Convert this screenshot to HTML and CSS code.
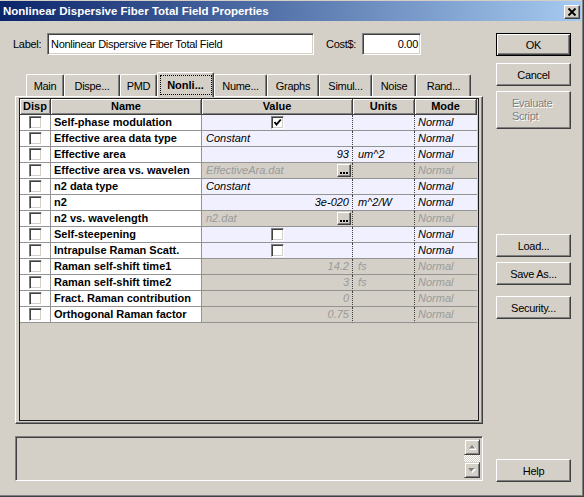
FILE: index.html
```html
<!DOCTYPE html>
<html>
<head>
	<meta charset="utf-8">
	<title>Nonlinear Dispersive Fiber Total Field Properties</title>
	<link rel="stylesheet" href="styles.css">
</head>
<body>
<div class="window">
	<div class="titlebar">
		<span class="title">Nonlinear Dispersive Fiber Total Field Properties</span>
		<span class="close"><svg width="12" height="10" viewBox="0 0 12 10"><path d="M2.5 1.5 L9.5 8.5 M9.5 1.5 L2.5 8.5" stroke="#000" stroke-width="1.8" fill="none"/></svg></span>
	</div>

	<div class="client">
		<div class="main">
			<div class="label-row">
				<span class="field-label">Label:</span>
				<div class="text-input name-input">Nonlinear Dispersive Fiber Total Field</div>
				<span class="field-label cost-label">Cost$:</span>
				<div class="text-input cost-input">0.00</div>
			</div>

			<div class="tabs">
				<div class="tab" style="width:38px">Main</div>
				<div class="tab" style="width:56px">Dispe...</div>
				<div class="tab" style="width:37px">PMD</div>
				<div class="tab active" style="width:57px"><span class="focus">Nonli...</span></div>
				<div class="tab" style="width:53px">Nume...</div>
				<div class="tab" style="width:52px">Graphs</div>
				<div class="tab" style="width:53px">Simul...</div>
				<div class="tab" style="width:44px">Noise</div>
				<div class="tab" style="width:55px">Rand...</div>
			</div>

			<div class="panel">
				<div class="grid">
					<table>
						<colgroup>
							<col style="width:31px">
							<col style="width:151px">
							<col style="width:151px">
							<col style="width:62px">
							<col style="width:62px">
						</colgroup>
						<tr>
							<th>Disp</th><th>Name</th><th>Value</th><th>Units</th><th>Mode</th>
						</tr>
						<tr>
							<td class="disp"><div class="center"><span class="check"></span></div></td>
							<td class="name">Self-phase modulation</td>
							<td class="val"><div class="center"><span class="check checked"><svg width="9" height="9" viewBox="0 0 9 9"><path d="M1.5 4 L3.5 6.5 L7.8 1.5" stroke="#000" stroke-width="1.9" fill="none"/></svg></span></div></td>
							<td class="unit"></td>
							<td class="mode">Normal</td>
						</tr>
						<tr>
							<td class="disp"><div class="center"><span class="check"></span></div></td>
							<td class="name">Effective area data type</td>
							<td class="val">Constant</td>
							<td class="unit"></td>
							<td class="mode">Normal</td>
						</tr>
						<tr>
							<td class="disp"><div class="center"><span class="check"></span></div></td>
							<td class="name">Effective area</td>
							<td class="val num">93</td>
							<td class="unit">um^2</td>
							<td class="mode">Normal</td>
						</tr>
						<tr class="off">
							<td class="disp"><div class="center"><span class="check"></span></div></td>
							<td class="name">Effective area vs. wavelen</td>
							<td class="val file"><div class="file-row"><span>EffectiveAra.dat</span><span class="browse"><svg width="10" height="9" viewBox="0 0 10 9"><rect x="1" y="6" width="2" height="2"/><rect x="4" y="6" width="2" height="2"/><rect x="7" y="6" width="2" height="2"/></svg></span></div></td>
							<td class="unit"></td>
							<td class="mode">Normal</td>
						</tr>
						<tr>
							<td class="disp"><div class="center"><span class="check"></span></div></td>
							<td class="name">n2 data type</td>
							<td class="val">Constant</td>
							<td class="unit"></td>
							<td class="mode">Normal</td>
						</tr>
						<tr>
							<td class="disp"><div class="center"><span class="check"></span></div></td>
							<td class="name">n2</td>
							<td class="val num">3e-020</td>
							<td class="unit">m^2/W</td>
							<td class="mode">Normal</td>
						</tr>
						<tr class="off">
							<td class="disp"><div class="center"><span class="check"></span></div></td>
							<td class="name">n2 vs. wavelength</td>
							<td class="val file"><div class="file-row"><span>n2.dat</span><span class="browse"><svg width="10" height="9" viewBox="0 0 10 9"><rect x="1" y="6" width="2" height="2"/><rect x="4" y="6" width="2" height="2"/><rect x="7" y="6" width="2" height="2"/></svg></span></div></td>
							<td class="unit"></td>
							<td class="mode">Normal</td>
						</tr>
						<tr>
							<td class="disp"><div class="center"><span class="check"></span></div></td>
							<td class="name">Self-steepening</td>
							<td class="val"><div class="center"><span class="check"></span></div></td>
							<td class="unit"></td>
							<td class="mode">Normal</td>
						</tr>
						<tr>
							<td class="disp"><div class="center"><span class="check"></span></div></td>
							<td class="name">Intrapulse Raman Scatt.</td>
							<td class="val"><div class="center"><span class="check"></span></div></td>
							<td class="unit"></td>
							<td class="mode">Normal</td>
						</tr>
						<tr class="off">
							<td class="disp"><div class="center"><span class="check"></span></div></td>
							<td class="name">Raman self-shift time1</td>
							<td class="val num">14.2</td>
							<td class="unit">fs</td>
							<td class="mode">Normal</td>
						</tr>
						<tr class="off">
							<td class="disp"><div class="center"><span class="check"></span></div></td>
							<td class="name">Raman self-shift time2</td>
							<td class="val num">3</td>
							<td class="unit">fs</td>
							<td class="mode">Normal</td>
						</tr>
						<tr class="off">
							<td class="disp"><div class="center"><span class="check"></span></div></td>
							<td class="name">Fract. Raman contribution</td>
							<td class="val num">0</td>
							<td class="unit"></td>
							<td class="mode">Normal</td>
						</tr>
						<tr class="off">
							<td class="disp"><div class="center"><span class="check"></span></div></td>
							<td class="name">Orthogonal Raman factor</td>
							<td class="val num">0.75</td>
							<td class="unit"></td>
							<td class="mode">Normal</td>
						</tr>
					</table>
				</div>
			</div>

			<div class="console">
				<div class="scrollbar">
					<div class="arrow"><svg width="7" height="5" viewBox="0 0 7 5"><path d="M4 1 L8 5 L0 5 Z" fill="#fff"/><path d="M3 0 L6 3.5 L0 3.5 Z" fill="#808080"/></svg></div>
					<div class="track"></div>
					<div class="arrow"><svg width="8" height="5" viewBox="0 0 8 5"><path d="M1 1 L8 1 L4.5 5 Z" fill="#fff"/><path d="M0 0 L6.5 0 L3.2 3.8 Z" fill="#808080"/></svg></div>
				</div>
			</div>
		</div>

		<div class="side">
			<div class="btn default ok">OK</div>
			<div class="btn cancel">Cancel</div>
			<div class="btn disabled evaluate">Evaluate<br>Script</div>
			<div class="btn load">Load...</div>
			<div class="btn save">Save As...</div>
			<div class="btn security">Security...</div>
			<div class="btn help">Help</div>
		</div>
	</div>
</div>
</body>
</html>
```

FILE: styles.css
```css
body {
	margin: 0;
	background: #d4d0c8;
	font-family: "Liberation Sans", Arial, sans-serif;
	font-size: 11px;
	letter-spacing: -0.3px;
	color: #000;
}

.window {
	width: 584px;
	height: 497px;
	box-sizing: border-box;
	padding-top: 1px;
	border-right: 1px solid #404040;
	border-bottom: 1px solid #404040;
	box-shadow: inset -1px -1px #808080;
	overflow: hidden;
}

/* title bar */
.titlebar {
	height: 20px;
	margin-right: 2px;
	padding-left: 3px;
	background: linear-gradient(to right, #0a246a, #a6caf0);
	display: flex;
	justify-content: space-between;
	align-items: flex-start;
}
.title {
	color: #fff;
	font-weight: bold;
	font-size: 11.5px;
	letter-spacing: 0;
	line-height: 20px;
}
.close {
	width: 16px;
	height: 14px;
	box-sizing: border-box;
	margin: 4px 1px 0 0;
	background: #d4d0c8;
	border: 1px solid;
	border-color: #fff #404040 #404040 #fff;
	box-shadow: inset -1px -1px #808080;
	display: flex;
	align-items: center;
	justify-content: center;
}

.client {
	display: flex;
}
.main {
	width: 496px;
}
.side {
	width: 75px;
	display: flex;
	flex-direction: column;
}

/* label + cost */
.label-row {
	display: flex;
	align-items: center;
	height: 22px;
	margin-top: 12px;
	padding-left: 13px;
}
.field-label {
	width: 34px;
}
.cost-label {
	width: 36px;
	margin-left: 12px;
}
.text-input {
	height: 22px;
	box-sizing: border-box;
	background: #fff;
	border: 1px solid;
	border-color: #808080 #fff #fff #808080;
	box-shadow: inset 1px 1px #404040, inset -1px -1px #d4d0c8;
	display: flex;
	align-items: center;
	padding: 0 3px;
}
.name-input {
	width: 267px;
}
.cost-input {
	width: 59px;
	justify-content: flex-end;
	padding-right: 2px;
}

/* tabs */
.tabs {
	display: flex;
	align-items: flex-end;
	height: 24px;
	margin-top: 17px;
	padding-left: 26px;
	position: relative;
	z-index: 1;
}
.tab {
	height: 22px;
	box-sizing: border-box;
	background: #d4d0c8;
	border-top: 1px solid #fff;
	border-left: 1px solid #fff;
	border-right: 1px solid #404040;
	box-shadow: inset -1px 0 #808080;
	border-radius: 2px 2px 0 0;
	display: flex;
	align-items: center;
	justify-content: center;
}
.tab.active {
	height: 25px;
	margin-bottom: -1px;
	font-weight: bold;
	letter-spacing: 0;
}
.focus {
	width: 52px;
	height: 20px;
	box-sizing: border-box;
	border: 1px dotted #000;
	display: flex;
	align-items: center;
	justify-content: center;
}

/* tab page */
.panel {
	width: 468px;
	height: 328px;
	box-sizing: border-box;
	margin-left: 15px;
	border: 1px solid;
	border-color: #fff #404040 #404040 #fff;
	box-shadow: inset -1px -1px #808080;
	padding: 1px 3px 2px 3px;
}
.grid {
	height: 100%;
	box-sizing: border-box;
	border: 1px solid #1c1c1c;
	background: #d4d0c8;
}
table {
	width: 457px;
	table-layout: fixed;
	border-collapse: separate;
	border-spacing: 0;
}
th {
	padding: 0;
	line-height: 15px;
	background: #d4d0c8;
	border-right: 1px solid #404040;
	border-bottom: 1px solid #404040;
	box-shadow: inset 1px 1px #fff, inset -1px -1px #808080;
	font-weight: bold;
	letter-spacing: 0;
}
td {
	padding: 0 4px;
	line-height: 15px;
	border-bottom: 1px solid #939393;
	white-space: nowrap;
	overflow: hidden;
}
.disp {
	padding: 0;
	background: #fff;
	border-right: 1px solid #939393;
}
.name {
	padding-left: 3px;
	background: #fff;
	font-weight: bold;
	letter-spacing: 0;
	border-right: 1px solid #939393;
}
.val, .unit, .mode {
	background: #f0f0ff;
	font-style: italic;
	letter-spacing: 0;
}
.val, .unit {
	border-right: 1px dotted #404040;
}
.unit {
	padding-left: 5px;
}
.mode {
	padding-left: 3px;
}
.num {
	text-align: right;
	padding-right: 3px;
}
.off .val, .off .unit, .off .mode {
	background: #d4d0c8;
	color: #9a9a9a;
}
.val.file {
	padding-right: 1px;
}
.file-row {
	display: flex;
	justify-content: space-between;
	align-items: center;
	height: 15px;
}
.browse {
	width: 14px;
	height: 13px;
	box-sizing: border-box;
	background: #d4d0c8;
	border: 1px solid;
	border-color: #fff #404040 #404040 #fff;
	box-shadow: inset -1px -1px #808080;
	display: flex;
	align-items: center;
	justify-content: center;
}
.center {
	height: 15px;
	display: flex;
	align-items: center;
	justify-content: center;
}
.val .center {
	margin-right: -1px;
}
.check {
	width: 13px;
	height: 13px;
	box-sizing: border-box;
	background: #fff;
	border: 1px solid;
	border-color: #808080 #fff #fff #808080;
	box-shadow: inset 1px 1px #404040, inset -1px -1px #d4d0c8;
	display: flex;
	align-items: center;
	justify-content: center;
}

/* message box */
.console {
	width: 468px;
	height: 45px;
	box-sizing: border-box;
	margin: 12px 0 0 15px;
	padding: 2px;
	border: 1px solid;
	border-color: #808080 #fff #fff #808080;
	box-shadow: inset 1px 1px #404040, inset -1px -1px #d4d0c8;
	display: flex;
	justify-content: flex-end;
}
.scrollbar {
	width: 16px;
	display: flex;
	flex-direction: column;
}
.arrow {
	height: 16px;
	box-sizing: border-box;
	border: 1px solid;
	border-color: #d4d0c8 #404040 #404040 #d4d0c8;
	box-shadow: inset 1px 1px #fff, inset -1px -1px #808080;
	display: flex;
	align-items: center;
	justify-content: center;
}
.track {
	flex: 1;
	background: repeating-conic-gradient(#fff 0 25%, #d4d0c8 0 50%) 0 0 / 2px 2px;
}

/* buttons */
.btn {
	height: 23px;
	box-sizing: border-box;
	background: #d4d0c8;
	border: 1px solid;
	border-color: #fff #404040 #404040 #fff;
	box-shadow: inset -1px -1px #808080;
	display: flex;
	align-items: center;
	justify-content: center;
}
.btn.default {
	border-color: #000;
	box-shadow: inset 1px 1px #fff, inset -1px -1px #404040, inset -2px -2px #808080;
}
.ok { margin-top: 12px; }
.cancel { margin-top: 7px; }
.evaluate {
	height: 38px;
	margin-top: 5px;
	justify-content: flex-start;
	padding-left: 15px;
	line-height: 13px;
}
.disabled {
	color: #808080;
	text-shadow: 1px 1px #fff;
}
.load { margin-top: 105px; }
.save { margin-top: 5px; }
.security { margin-top: 11px; }
.help { margin-top: 140px; }
```
